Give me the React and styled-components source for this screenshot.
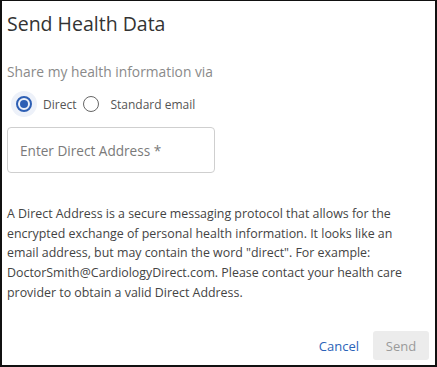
import React, { useState } from 'react';
import styled, { createGlobalStyle } from 'styled-components';

const GlobalStyle = createGlobalStyle`
  html, body {
    margin: 0;
    padding: 0;
    background: #ffffff;
  }
  * {
    box-sizing: border-box;
  }
`;

const Dialog = styled.div`
  width: 437px;
  height: 367px;
  border: 2px solid #111;
  border-top-width: 1px;
  background: #fff;
  display: flex;
  flex-direction: column;
  padding: 0 6px 0 5px;
  font-family: 'Open Sans', 'Liberation Sans', sans-serif;
`;

const Title = styled.h1`
  margin: 9px 0 0;
  font-size: 19.5px;
  line-height: 28px;
  font-weight: 400;
  color: #333;
`;

const Label = styled.div`
  margin-top: 24px;
  font-size: 13.8px;
  line-height: 19px;
  color: #8a8a8a;
`;

const RadioRow = styled.div`
  display: flex;
  align-items: center;
  margin-top: 9px;
  height: 28px;
`;

const RadioOption = styled.label`
  display: flex;
  align-items: center;
  font-size: 12px;
  color: #555;
  cursor: pointer;
  margin-right: 2px;
`;

const Halo = styled.span`
  width: 26px;
  height: 26px;
  border-radius: 50%;
  display: flex;
  align-items: center;
  justify-content: center;
  background: ${(p) => (p.$active ? '#edf1f9' : 'transparent')};
  margin: 0 6px 0 ${(p) => (p.$first ? '4px' : '0')};
`;

const Circle = styled.span`
  width: 16px;
  height: 16px;
  border-radius: 50%;
  border: ${(p) => (p.$checked ? '2px solid #2d5fb4' : '1.5px solid #666')};
  display: flex;
  align-items: center;
  justify-content: center;
  &::after {
    content: '';
    width: 8px;
    height: 8px;
    border-radius: 50%;
    background: ${(p) => (p.$checked ? '#2d5fb4' : 'transparent')};
  }
`;

const AddressInput = styled.input`
  margin-top: 9px;
  width: 208px;
  height: 46px;
  border: 1px solid #cfcfcf;
  border-radius: 4px;
  padding: 0 12px;
  font-family: inherit;
  font-size: 13.6px;
  color: #333;
  outline: none;
  &::placeholder {
    color: #7a7a7a;
  }
`;

const Info = styled.p`
  margin: 31px 0 0;
  max-width: 405px;
  font-size: 12.4px;
  line-height: 19.7px;
  color: #444;
`;

const Footer = styled.div`
  margin-top: auto;
  margin-bottom: 5px;
  display: flex;
  justify-content: flex-end;
  align-items: center;
  gap: 14px;
`;

const TextButton = styled.button`
  background: none;
  border: none;
  padding: 0;
  font-family: inherit;
  font-size: 13px;
  color: #2b63b8;
  cursor: pointer;
`;

const SendButton = styled.button`
  width: 56px;
  height: 29px;
  border: none;
  border-radius: 3px;
  background: #ececec;
  color: #9a9a9a;
  font-family: inherit;
  font-size: 13px;
`;

const options = [
  { id: 'direct', label: 'Direct' },
  { id: 'email', label: 'Standard email' },
];

export default function App() {
  const [via, setVia] = useState('direct');

  return (
    <>
      <GlobalStyle />
      <Dialog>
        <Title>Send Health Data</Title>
        <Label>Share my health information via</Label>
        <RadioRow>
          {options.map((o, i) => (
            <RadioOption key={o.id} onClick={() => setVia(o.id)}>
              <Halo $active={via === o.id} $first={i === 0}>
                <Circle $checked={via === o.id} />
              </Halo>
              {o.label}
            </RadioOption>
          ))}
        </RadioRow>
        <AddressInput placeholder="Enter Direct Address *" />
        <Info>
          A Direct Address is a secure messaging protocol that allows for the encrypted exchange of
          personal health information. It looks like an email address, but may contain the word
          "direct". For example: DoctorSmith@CardiologyDirect.com. Please contact your health care
          provider to obtain a valid Direct Address.
        </Info>
        <Footer>
          <TextButton>Cancel</TextButton>
          <SendButton disabled>Send</SendButton>
        </Footer>
      </Dialog>
    </>
  );
}
